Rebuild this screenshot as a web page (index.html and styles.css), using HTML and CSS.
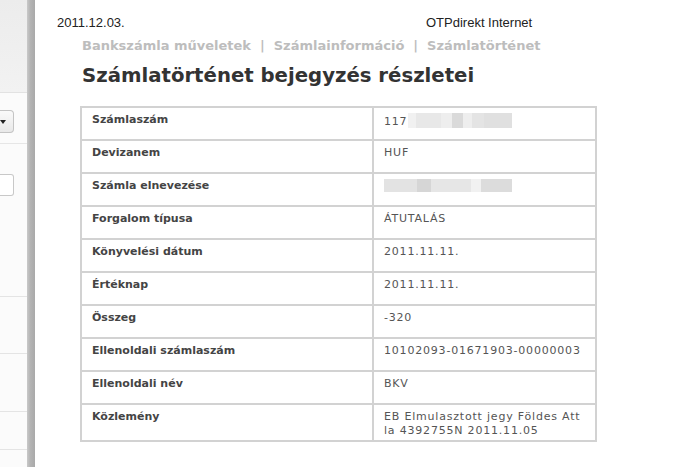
FILE: index.html
```html
<!DOCTYPE html>
<html lang="hu">
<head>
<meta charset="utf-8">
<title>Számlatörténet bejegyzés részletei</title>
<link rel="stylesheet" href="styles.css">
</head>
<body>
<div class="page">
  <aside class="side">
    <div class="side-top"></div>
    <div class="side-select"><span class="arrow"></span></div>
    <div class="side-sep1"></div>
    <div class="side-input"></div>
    <div class="side-row r1"></div>
    <div class="side-row r2"></div>
    <div class="side-row r3"></div>
    <div class="side-row r4"></div>
  </aside>
  <div class="divider"></div>
  <main class="main">
    <header class="topline">
      <span class="date">2011.12.03.</span>
      <span class="brand">OTPdirekt Internet</span>
    </header>
    <nav class="crumbs">Bankszámla műveletek<span class="sep">|</span>Számlainformáció<span class="sep">|</span>Számlatörténet</nav>
    <h1 class="title">Számlatörténet bejegyzés részletei</h1>
    <table class="details">
      <tr><th>Számlaszám</th><td>117<span class="blur b1"></span></td></tr>
      <tr><th>Devizanem</th><td>HUF</td></tr>
      <tr><th>Számla elnevezése</th><td><span class="blur b2"></span></td></tr>
      <tr><th>Forgalom típusa</th><td>ÁTUTALÁS</td></tr>
      <tr><th>Könyvelési dátum</th><td>2011.11.11.</td></tr>
      <tr><th>Értéknap</th><td>2011.11.11.</td></tr>
      <tr><th>Összeg</th><td>-320</td></tr>
      <tr><th>Ellenoldali számlaszám</th><td>10102093-01671903-00000003</td></tr>
      <tr><th>Ellenoldali név</th><td>BKV</td></tr>
      <tr class="last"><th>Közlemény</th><td>EB Elmulasztott jegy Földes Att<br>la 4392755N 2011.11.05</td></tr>
    </table>
  </main>
</div>
</body>
</html>
```
FILE: styles.css
```css
html, body {
  margin: 0;
  padding: 0;
  background: #fff;
}
.page {
  display: flex;
  height: 467px;
  overflow: hidden;
}
.side {
  width: 27px;
  flex: none;
  background: #fbfbfb;
  display: flex;
  flex-direction: column;
}
.side-top {
  height: 92px;
  background: linear-gradient(#ececec, #f2f2f2);
  border-bottom: 1px solid #e2e2e2;
}
.side-select {
  margin-top: 17px;
  width: 13px;
  height: 21px;
  border: 1px solid #c4c4c4;
  border-left: none;
  border-radius: 0 4px 4px 0;
  background: linear-gradient(#fafafa, #e8e8e8);
  position: relative;
}
.arrow {
  position: absolute;
  left: 0;
  top: 9px;
  width: 0;
  height: 0;
  border-left: 3px solid transparent;
  border-right: 3px solid transparent;
  border-top: 4px solid #222;
}
.side-sep1 {
  margin-top: 10px;
  border-top: 1px solid #e6e6e6;
}
.side-input {
  margin-top: 30px;
  width: 13px;
  height: 20px;
  border: 1px solid #c8c8c8;
  border-left: none;
  border-radius: 0 3px 3px 0;
  background: #fff;
}
.side-row {
  border-top: 1px solid #e4e4e4;
}
.r1 { margin-top: 100px; }
.r2 { margin-top: 56px; }
.r3 { margin-top: 57px; }
.r4 { margin-top: 37px; }
.divider {
  width: 8px;
  flex: none;
  background: linear-gradient(to right, #c9c9c9, #b4b4b4 40%, #a9a9a9);
}
.main {
  flex: 1;
  padding-left: 22px;
  padding-top: 15px;
  background: #fff;
}
.topline {
  display: flex;
  font-family: "Liberation Sans", Arial, sans-serif;
  font-size: 13px;
  color: #222;
  height: 18px;
  line-height: 16px;
}
.date {
  width: 369px;
}
.crumbs {
  margin: 5px 0 0 25px;
  font-family: "DejaVu Sans", Verdana, sans-serif;
  font-weight: bold;
  font-size: 13px;
  line-height: 16px;
  color: #bdbdbd;
}
.sep {
  margin: 0 9px;
}
.title {
  margin: 10px 0 0 25px;
  font-family: "DejaVu Sans", Verdana, sans-serif;
  font-weight: bold;
  font-size: 19.7px;
  line-height: 24px;
  color: #333;
}
.details {
  margin: 18px 0 0 23px;
  width: 517px;
  border-collapse: collapse;
  border: 2px solid #d2d2d2;
  font-family: "DejaVu Sans", Verdana, sans-serif;
  font-size: 11px;
}
.details th, .details td {
  border: 2px solid #d2d2d2;
  height: 33px;
  padding: 5px 10px 0 10px;
  vertical-align: top;
  text-align: left;
  line-height: 14px;
  box-sizing: border-box;
}
.details th {
  width: 292px;
  color: #444;
  letter-spacing: 0;
}
.details td {
  color: #555;
  letter-spacing: 0.8px;
}
.details tr.last th, .details tr.last td {
  height: 37px;
}
.blur {
  display: inline-block;
  height: 15px;
  vertical-align: -3px;
}
.b1 {
  width: 104px;
  margin-left: 1px;
  background: linear-gradient(to right, #f1f1f1 0 8%, #e8e8e8 8% 32%, #eeeeee 32% 42%, #dadada 42% 53%, #eeeeee 53% 62%, #e4e4e4 62% 73%, #e0e0e0 73% 100%);
}
.b2 {
  width: 128px;
  height: 13px;
  vertical-align: -2px;
  background: linear-gradient(to right, #e3e3e3 0 26%, #d6d6d6 26% 37%, #e6e6e6 37% 68%, #f1f1f1 68% 76%, #dcdcdc 76% 100%);
}
```
